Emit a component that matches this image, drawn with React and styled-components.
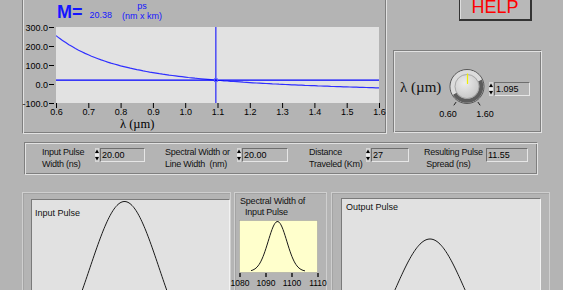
import React from 'react'
import styled, { createGlobalStyle, css } from 'styled-components'

const GlobalStyle = createGlobalStyle`
  body {
    margin: 0;
    background: #b4b4b4;
    font-family: 'Liberation Sans', Arial, sans-serif;
    overflow: hidden;
  }
`

const groove = css`
  box-sizing: border-box;
  border: 1px solid;
  border-color: #7f7f7f #e2e2e2 #e2e2e2 #7f7f7f;
  box-shadow: inset 1px 1px 0 #e2e2e2, inset -1px -1px 0 #7f7f7f;
`

const Page = styled.div`
  width: 563px;
  height: 290px;
  overflow: hidden;
  background: #b4b4b4;
  color: #111;
`

const TopRow = styled.div`
  display: flex;
  height: 135px;
  margin-left: 22px;
`

const ChartPanel = styled.div`
  ${groove};
  width: 365px;
  height: 134px;
  border-top: none;
  box-shadow: inset 1px 0 0 #e2e2e2, inset -1px -1px 0 #7f7f7f;
`

const ChartHeader = styled.div`
  display: flex;
  align-items: flex-start;
  height: 25px;
  padding-left: 34px;
  color: #1414ff;
`

const MLabel = styled.div`
  font-size: 18px;
  line-height: 18px;
  font-weight: bold;
  margin-top: 3px;
`

const MValue = styled.div`
  font-size: 9px;
  line-height: 9px;
  margin: 10.5px 0 0 7px;
`

const Units = styled.div`
  display: flex;
  flex-direction: column;
  align-items: center;
  font-size: 9px;
  line-height: 10px;
  margin: 0.5px 0 0 10px;
`

const SideColumn = styled.div`
  display: flex;
  flex-direction: column;
  width: 149px;
  margin-left: 6px;
`

const HelpButton = styled.button`
  box-sizing: border-box;
  display: flex;
  justify-content: center;
  align-items: flex-start;
  width: 73px;
  height: 21px;
  margin: 0 0 0 66px;
  padding: 0;
  background: #b8b8b8;
  border: 1px solid #333;
  border-top: none;
  border-right-width: 2px;
  border-bottom-width: 2px;
  box-shadow: inset 1px 0 0 #dedede;
  color: #ff0000;
  font-family: 'Liberation Sans', Arial, sans-serif;
  font-size: 18px;
  line-height: 15px;
`

const KnobPanel = styled.div`
  ${groove};
  display: flex;
  align-items: flex-start;
  height: 83px;
  margin-top: 29px;
  padding-left: 6px;
`

const KnobLabel = styled.div`
  width: 41px;
  margin-top: 29px;
  font-family: 'Liberation Serif', 'Times New Roman', serif;
  font-size: 15px;
  line-height: 15px;
  white-space: nowrap;
`

const DialBox = styled.svg`
  margin-top: 16px;
  overflow: visible;
  flex-shrink: 0;
`

const Numeric = styled.div`
  display: flex;
  margin-top: ${p => p.$top ?? 1}px;
  flex-shrink: 0;
`

const NumBox = styled.div`
  box-sizing: border-box;
  width: ${p => p.$w}px;
  height: 14px;
  margin-left: 1px;
  padding-left: 1px;
  border: 1px solid;
  border-color: #6e6e6e #e6e6e6 #e6e6e6 #6e6e6e;
  background: #b6b6b6;
  font-size: 9px;
  line-height: 12px;
  color: #000;
`

const ParamPanel = styled.div`
  ${groove};
  display: flex;
  align-items: flex-start;
  width: 514px;
  height: 33px;
  margin: 7px 0 0 24px;
  padding: 4px 0 0 17px;
`

const ParamGroup = styled.div`
  display: flex;
  align-items: flex-start;
  margin-right: ${p => p.$gap}px;
`

const ParamLabel = styled.div`
  width: ${p => p.$w}px;
  font-size: 9px;
  line-height: 11.5px;
  letter-spacing: -0.25px;
  white-space: pre;
  color: #111;
`

const BottomRow = styled.div`
  display: flex;
  align-items: flex-start;
  margin: 17px 0 0 22px;
`

const GraphFrame = styled.div`
  box-sizing: border-box;
  width: ${p => p.$w}px;
  height: 130px;
  margin-right: ${p => p.$gap || 0}px;
  padding: ${p => p.$pad};
  border: 1px solid #cfcfcf;
  box-shadow: inset 1px 1px 0 #a4a4a4;
  flex-shrink: 0;
`

const PlotArea = styled.div`
  position: relative;
  box-sizing: border-box;
  width: ${p => p.$w}px;
  height: 130px;
  padding: ${p => p.$labelTop}px 0 0 ${p => p.$labelLeft}px;
  background: #e1e1e1;
  border-top: 1px solid #7a7a7a;
  border-left: 1px solid #7a7a7a;
  border-right: 1px solid #f2f2f2;
`

const PlotTitle = styled.div`
  position: relative;
  z-index: 1;
  font-size: 9px;
  line-height: 11px;
  color: #111;
`

const CurveLayer = styled.svg`
  position: absolute;
  left: 0;
  top: 0;
`

const SpecLabel = styled.div`
  font-size: 9px;
  line-height: 11px;
  letter-spacing: -0.2px;
  padding-left: ${p => p.$indent || 0}px;
  white-space: nowrap;
`

const SpecPlot = styled.svg`
  display: block;
  margin: 2px 0 0 -1px;
  overflow: visible;
`

// dispersion chart geometry
const PLOT = { x: 33, y: 2, w: 323, h: 76 }
const xOf = l => PLOT.x + (l - 0.6) * PLOT.w
const yOf = d => PLOT.y + (300 - d) * (PLOT.h / 400)
const dispersion = l => 57.88 / l ** 3 - 21.64 * l
const LAMBDA = 1.095
const M = 20.38

const dispersionPath = () => {
  const pts = []
  for (let l = 0.6; l <= 1.6001; l += 0.01) {
    pts.push(`${xOf(l).toFixed(1)},${yOf(dispersion(l)).toFixed(1)}`)
  }
  return 'M' + pts.join(' L')
}

const gaussPath = (cx, peak, base, sigma, x0, x1) => {
  const pts = []
  for (let x = x0; x <= x1; x += 1) {
    const y = base - (base - peak) * Math.exp(-((x - cx) ** 2) / (2 * sigma * sigma))
    pts.push(`${x},${y.toFixed(2)}`)
  }
  return 'M' + pts.join(' L')
}

const yTicks = [300, 200, 100, 0, -100]
const xTicks = [0.6, 0.7, 0.8, 0.9, 1.0, 1.1, 1.2, 1.3, 1.4, 1.5, 1.6]

const DispersionChart = () => (
  <svg width='362' height='108' style={{ display: 'block', overflow: 'visible' }}>
    <rect x={PLOT.x} y={PLOT.y} width={PLOT.w} height={PLOT.h} fill='#e2e2e2' />
    {yTicks.map(v => (
      <g key={v}>
        <line x1='26' x2='31' y1={yOf(v) + 0.5} y2={yOf(v) + 0.5} stroke='#000' />
        <text x='25' y={yOf(v) + 3.5} fontSize='9' textAnchor='end' fill='#000'>
          {v.toFixed(1)}
        </text>
      </g>
    ))}
    {xTicks.map(v => (
      <g key={v}>
        <line x1={xOf(v) + 0.5} x2={xOf(v) + 0.5} y1='78' y2='83' stroke='#000' />
        <text x={xOf(v) + 0.5} y='90' fontSize='9' textAnchor='middle' fill='#000'>
          {v.toFixed(1)}
        </text>
      </g>
    ))}
    <text x='97' y='103' fontSize='12.5' fill='#000' fontFamily="'Liberation Serif', serif">
      λ  (µm)
    </text>
    <svg x={PLOT.x} y={PLOT.y} width={PLOT.w} height={PLOT.h} overflow='hidden'>
      <g transform={`translate(${-PLOT.x} ${-PLOT.y})`}>
        <path d={dispersionPath()} fill='none' stroke='#3030ff' strokeWidth='1.2' />
        <line x1={PLOT.x} x2={PLOT.x + PLOT.w} y1={yOf(M)} y2={yOf(M)} stroke='#0000ff' strokeWidth='1.2' />
        <line x1={xOf(LAMBDA)} x2={xOf(LAMBDA)} y1={PLOT.y} y2={PLOT.y + PLOT.h} stroke='#0000ff' />
        <rect x={xOf(LAMBDA) - 1.5} y={yOf(M) - 1.5} width='3' height='3' fill='none' stroke='#6060ff' strokeWidth='0.8' />
      </g>
    </svg>
  </svg>
)

const polar = (cx, cy, r, deg) => {
  const a = (deg * Math.PI) / 180
  return [cx + r * Math.sin(a), cy - r * Math.cos(a)]
}

const arc = (cx, cy, r, from, to) => {
  const [x0, y0] = polar(cx, cy, r, from)
  const [x1, y1] = polar(cx, cy, r, to)
  const large = to - from > 180 ? 1 : 0
  return `M${x0},${y0} A${r},${r} 0 ${large} 1 ${x1},${y1}`
}

const Dial = () => {
  const cx = 26
  const cy = 19.5
  const [lx0, ly0] = polar(cx, cy, 19, -145)
  const [lx1, ly1] = polar(cx, cy, 23, -145)
  const [rx0, ry0] = polar(cx, cy, 19, 145)
  const [rx1, ry1] = polar(cx, cy, 23, 145)
  return (
    <DialBox width='48' height='56'>
      <defs>
        <radialGradient id='face' cx='40%' cy='35%' r='70%'>
          <stop offset='0%' stopColor='#ececec' />
          <stop offset='100%' stopColor='#c6c6c6' />
        </radialGradient>
      </defs>
      <circle cx={cx} cy={cy} r='17' fill='#cdcdcd' stroke='#3c3c3c' strokeWidth='0.8' />
      <path d={arc(cx, cy, 14.3, 65, 240)} fill='none' stroke='#5c5c5c' strokeWidth='4' />
      <path d={arc(cx, cy, 14.3, 240, 425)} fill='none' stroke='#dcdcdc' strokeWidth='4' />
      <circle cx={cx} cy={cy} r='12' fill='url(#face)' stroke='#8c8c8c' strokeWidth='0.6' />
      <line x1={cx + 0.5} x2={cx + 0.5} y1='6.5' y2='17' stroke='#f0f000' strokeWidth='1.2' />
      <line x1={lx0} y1={ly0} x2={lx1} y2={ly1} stroke='#222' />
      <line x1={rx0} y1={ry0} x2={rx1} y2={ry1} stroke='#222' />
      <text x='7' y='50' fontSize='9' textAnchor='middle' fill='#000'>0.60</text>
      <text x='44' y='50' fontSize='9' textAnchor='middle' fill='#000'>1.60</text>
    </DialBox>
  )
}

const Spinner = () => (
  <svg width='4' height='14' style={{ display: 'block' }}>
    <rect x='0' y='0' width='4' height='14' fill='#d6d6d6' />
    <path d='M2,1.5 L4,5 L0,5 Z' fill='#000' />
    <path d='M0,9 L4,9 L2,12.5 Z' fill='#000' />
    <line x1='0' x2='4' y1='7' y2='7' stroke='#fff' />
  </svg>
)

const NumericControl = ({ value, width, top, indicator }) => (
  <Numeric $top={top}>
    {!indicator && <Spinner />}
    <NumBox $w={width}>{value}</NumBox>
  </Numeric>
)

const params = [
  { label: 'Input Pulse\nWidth (ns)', lw: 53, value: '20.00', bw: 45, gap: 20 },
  { label: 'Spectral Width or\nLine Width  (nm)', lw: 72, value: '20.00', bw: 46, gap: 21 },
  { label: 'Distance\nTraveled (Km)', lw: 57, value: '27', bw: 38, gap: 15 },
  { label: 'Resulting Pulse\n Spread (ns)', lw: 61, value: '11.55', bw: 42, gap: 0, indicator: true }
]

const App = () => (
  <Page>
    <GlobalStyle />
    <TopRow>
      <ChartPanel>
        <ChartHeader>
          <MLabel>M=</MLabel>
          <MValue>{M.toFixed(2)}</MValue>
          <Units>
            <span>ps</span>
            <span>(nm x km)</span>
          </Units>
        </ChartHeader>
        <DispersionChart />
      </ChartPanel>
      <SideColumn>
        <HelpButton>HELP</HelpButton>
        <KnobPanel>
          <KnobLabel>λ (µm)</KnobLabel>
          <Dial />
          <NumericControl value='1.095' width={36} top={31} />
        </KnobPanel>
      </SideColumn>
    </TopRow>

    <ParamPanel>
      {params.map(p => (
        <ParamGroup key={p.label} $gap={p.gap}>
          <ParamLabel $w={p.lw}>{p.label}</ParamLabel>
          <NumericControl value={p.value} width={p.bw} indicator={p.indicator} />
        </ParamGroup>
      ))}
    </ParamPanel>

    <BottomRow>
      <GraphFrame $w={209} $gap={3} $pad='6px 1px 0 8px'>
        <PlotArea $w={199} $labelTop={8} $labelLeft={3}>
          <CurveLayer width='198' height='130'>
            <path d={gaussPath(92.5, 1.5, 171, 34.7, 0, 198)} fill='none' stroke='#1a1a1a' />
          </CurveLayer>
          <PlotTitle>Input Pulse</PlotTitle>
        </PlotArea>
      </GraphFrame>

      <GraphFrame $w={93} $gap={4} $pad='3px 0 0 5px'>
        <SpecLabel>Spectral Width of</SpecLabel>
        <SpecLabel $indent={5}>Input Pulse</SpecLabel>
        <SpecPlot width='80' height='70'>
          <rect x='0.5' y='0.5' width='78' height='52' fill='#ffffcc' stroke='#9a9a9a' strokeWidth='0.5' />
          <path d={gaussPath(38.5, 1.5, 51.5, 9.3, 12, 66)} fill='none' stroke='#1a1a1a' />
          {[0, 1, 2, 3].map(i => (
            <g key={i}>
              <line x1={1 + i * 26} x2={1 + i * 26} y1='53' y2='57' stroke='#000' strokeWidth='1.3' />
              <text x={1 + i * 26} y='66' fontSize='8.5' textAnchor='middle' fill='#000'>
                {1080 + i * 10}
              </text>
            </g>
          ))}
        </SpecPlot>
      </GraphFrame>

      <GraphFrame $w={219} $pad='5px 8px 0 9px'>
        <PlotArea $w={200} $labelTop={3} $labelLeft={4}>
          <CurveLayer width='199' height='130'>
            <path d={gaussPath(88, 40, 172, 35.5, 0, 199)} fill='none' stroke='#1a1a1a' />
          </CurveLayer>
          <PlotTitle>Output Pulse</PlotTitle>
        </PlotArea>
      </GraphFrame>
    </BottomRow>
  </Page>
)

export default App
